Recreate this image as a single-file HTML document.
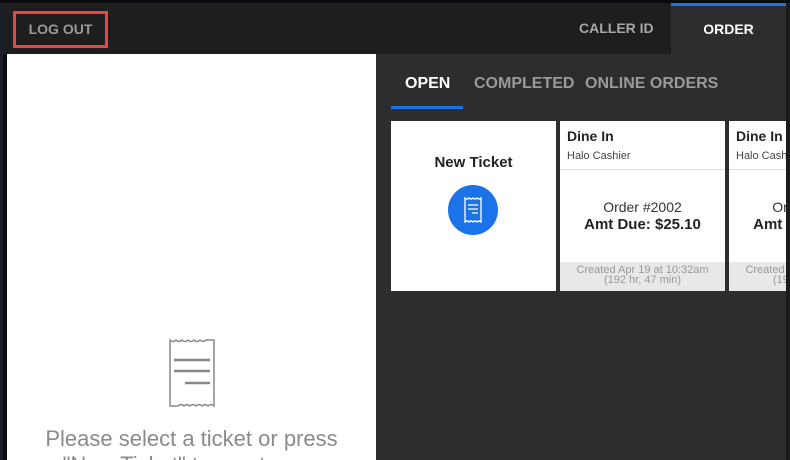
<!DOCTYPE html><html><head><style>
*{margin:0;padding:0;box-sizing:border-box}
html{width:790px;height:460px;overflow:hidden}
body{width:790px;height:460px;overflow:hidden;background:#0b0b0f;font-family:"Liberation Sans",sans-serif;position:relative}
.hdr{position:absolute;left:3px;top:3px;width:783px;height:51px;background:#1e1e1e}
.edge{position:absolute;left:0;top:3px;width:3px;height:457px;background:#1a1f2a}
.lo{position:absolute;left:13px;top:11px;width:95px;height:37px;border:3px solid #f04444;color:#9a9a9a;font-weight:bold;font-size:14px;line-height:31px;text-align:center}
.cid{position:absolute;left:579px;top:20px;color:#a8a8a8;font-weight:bold;font-size:14px}
.ord{position:absolute;left:671px;top:3px;width:115px;height:51px;background:#2d2d2d;border-top:3px solid #1a73e8;color:#fff;font-weight:bold;font-size:14px;text-align:center;line-height:46px}
.left{position:absolute;left:7px;top:54px;width:369px;height:406px;background:#fff;overflow:hidden}
.right{position:absolute;left:376px;top:54px;width:410px;height:406px;background:#2d2d2d}
.rt{position:absolute;left:786px;top:3px;width:4px;height:457px;background:#1b1b1b}
.tab{position:absolute;top:75px;font-weight:bold;font-size:16px;color:#9a9a9a}
.card{position:absolute;top:121px;height:170px;background:#fff}
.sub{font-size:11px;color:#444}
</style></head><body>
<div class="edge"></div>
<div class="hdr"></div>
<div class="lo">LOG OUT</div>
<div class="cid">CALLER ID</div>
<div class="ord">ORDER</div>
<div class="left">
<svg style="position:absolute;left:161px;top:284px" width="48" height="70" viewBox="0 0 48 70"><path d="M2 2 q3 3 6 0 q3 3 6 0 q3 3 6 0 q3 3 6 0 q3 3 6 0 q3 3 6 0 H46 V68 q-3 -3 -6 0 q-3 -3 -6 0 q-3 -3 -6 0 q-3 -3 -6 0 q-3 -3 -6 0 q-3 -3 -6 0 H2 Z" fill="none" stroke="#888" stroke-width="1.5"/><path d="M6 22H42M6 33H42M17 45H42" stroke="#888" stroke-width="2.5"/></svg>
<div style="position:absolute;left:0;width:369px;top:372px;text-align:center;font-size:22px;color:#8a8a8a;white-space:nowrap">Please select a ticket or press</div>
<div style="position:absolute;left:0;width:369px;top:398px;text-align:center;font-size:22px;color:#8a8a8a;white-space:nowrap">"New Ticket" to create one</div>
</div>
<div class="right"></div>
<div class="rt"></div>
<div class="tab" style="left:405px;color:#fff">OPEN</div>
<div style="position:absolute;left:391px;top:106px;width:72px;height:3px;background:#1a73e8"></div>
<div class="tab" style="left:474px">COMPLETED</div>
<div class="tab" style="left:585px">ONLINE ORDERS</div>
<div class="card" style="left:391px;width:165px">
<div style="position:absolute;top:33px;width:100%;text-align:center;font-weight:bold;font-size:15px;color:#222">New Ticket</div>
<div style="position:absolute;left:57px;top:64px;width:50px;height:50px;border-radius:50%;background:#1a73e8"><svg style="position:absolute;left:16px;top:12px" width="18" height="26" viewBox="0 0 18 26"><path d="M1 1 q2 2 4 0 q2 2 4 0 q2 2 4 0 q2 2 4 0 V25 q-2 -2 -4 0 q-2 -2 -4 0 q-2 -2 -4 0 q-2 -2 -4 0Z" fill="none" stroke="#fff" stroke-width="1.3"/><path d="M4 8H14M4 12H14M8 16H14" stroke="#fff" stroke-width="1.3"/></svg></div>
</div>
<div class="card" style="left:560px;width:165px">
<div style="position:absolute;left:7px;top:7px;font-weight:bold;font-size:14px;color:#222">Dine In</div>
<div class="sub" style="position:absolute;left:7px;top:29px">Halo Cashier</div>
<div style="position:absolute;top:48px;left:0;width:100%;height:1px;background:#ddd"></div>
<div style="position:absolute;top:78px;width:100%;text-align:center;font-size:14px;color:#333">Order #2002</div>
<div style="position:absolute;top:95px;width:100%;text-align:center;font-size:15px;font-weight:bold;color:#222">Amt Due: $25.10</div>
<div style="position:absolute;top:141px;left:0;width:100%;height:29px;background:#e8e8e8;text-align:center;font-size:11px;color:#999;line-height:10px;padding-top:3px">Created Apr 19 at 10:32am<br>(192 hr, 47 min)</div>
</div>
<div class="card" style="left:729px;width:57px;overflow:hidden">
<div style="position:absolute;left:7px;top:7px;font-weight:bold;font-size:14px;color:#222;white-space:nowrap">Dine In</div>
<div class="sub" style="position:absolute;left:7px;top:29px;white-space:nowrap">Halo Cashier</div>
<div style="position:absolute;top:48px;left:0;width:165px;height:1px;background:#ddd"></div>
<div style="position:absolute;top:78px;left:0;width:165px;text-align:center;font-size:14px;color:#333">Order #2003</div>
<div style="position:absolute;top:95px;left:0;width:165px;text-align:center;font-size:15px;font-weight:bold;color:#222;white-space:nowrap">Amt Due: $25.10</div>
<div style="position:absolute;top:141px;left:0;width:165px;height:29px;background:#e8e8e8;text-align:center;font-size:11px;color:#999;line-height:10px;padding-top:3px">Created Apr 19 at 10:32am<br>(192 hr, 47 min)</div>
</div>
</body></html>
